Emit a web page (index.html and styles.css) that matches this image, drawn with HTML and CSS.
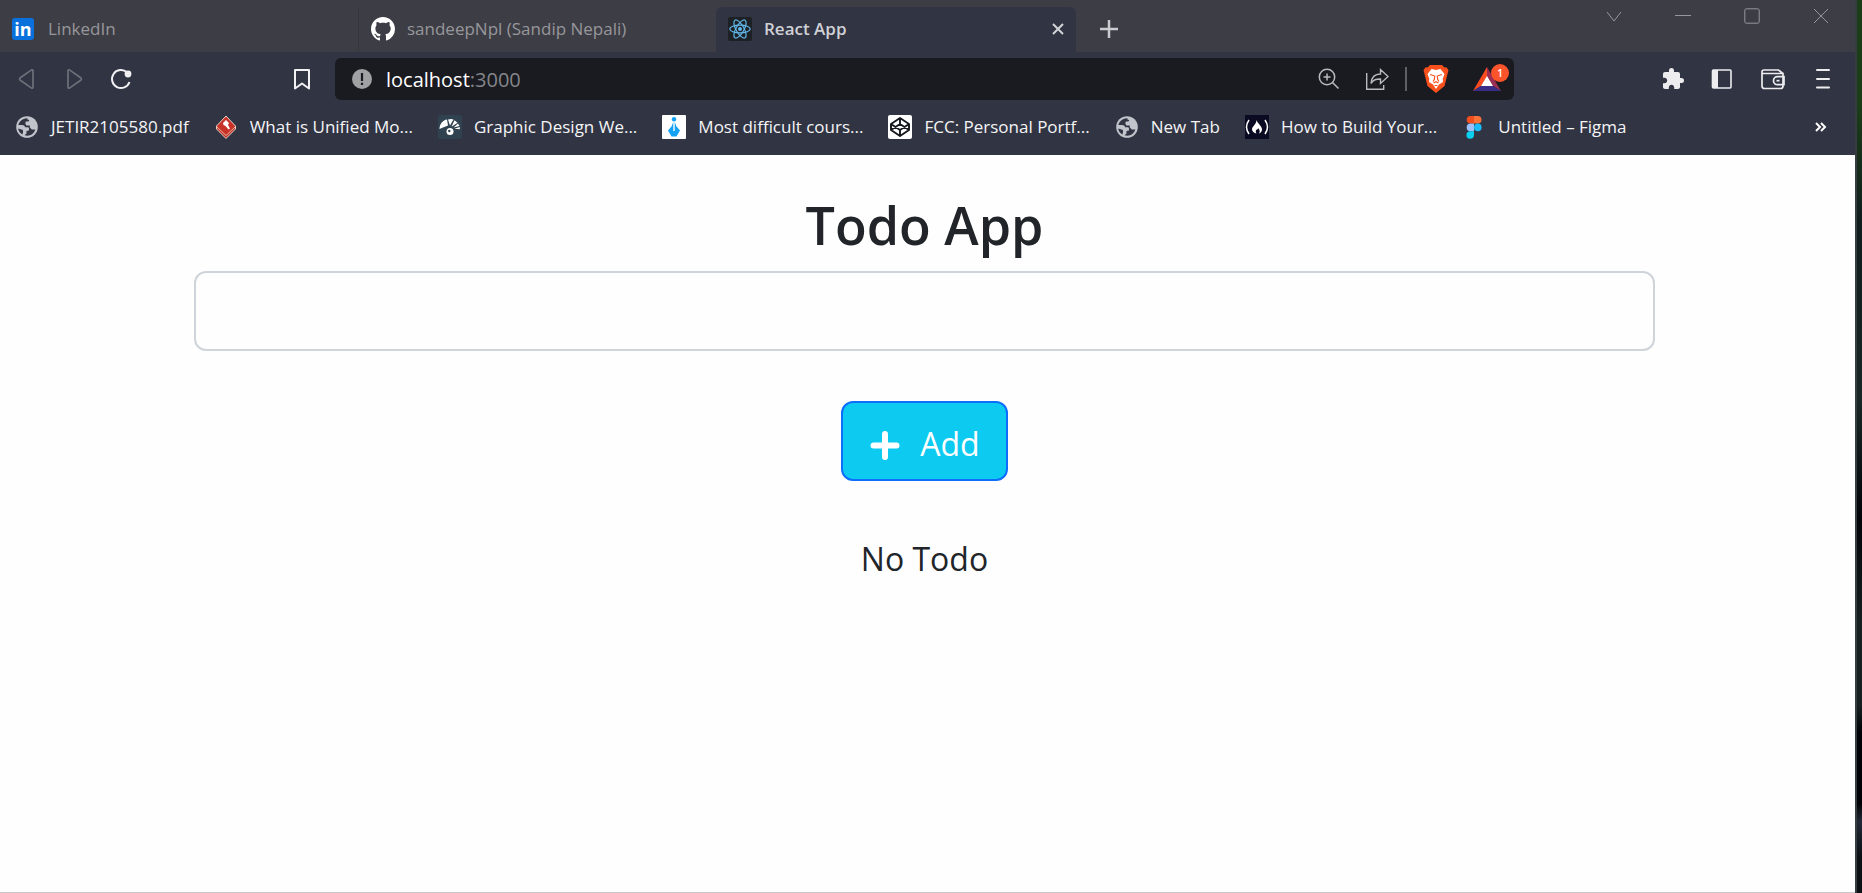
FILE: index.html
```html
<!DOCTYPE html>
<html lang="en">
<head>
<meta charset="utf-8">
<title>React App</title>
<link rel="stylesheet" href="styles.css">
</head>
<body>
<svg class="defs" aria-hidden="true">
  <symbol id="globe" viewBox="0 0 24 24">
    <circle cx="12" cy="12" r="10.800" fill="#c2c4cb"/>
    <path fill="#313443" d="M12.500 3.200C8 3 4.500 6 3.300 10h3.500c2 0 3 .8 3.300 2.200h2.400c1 0 1.500.7 1.500 1.600v1.700l-2.500.5v2.500l-2 1.700c5 1.500 9.500-1 10.800-5.700h-3.500l-2-2v-2h-3.500l-1-2 .5-2h2.500l1-1.300-2-1zM3.200 13.500c.3 2.500 1.800 4.700 4 6l.8-1.800V15z"/>
  </symbol>
</svg>
<div class="desktop">
  <div class="window">
    <header class="chrome">
      <div class="tabstrip">
        <div class="tabs">
          <button class="tab" type="button">
            <svg class="icon" viewBox="0 0 24 24"><rect y="1" width="22" height="22" rx="3" fill="#0a70dc"/><text x="11" y="19" class="in-mark">in</text></svg>
            <span>LinkedIn</span>
          </button>
          <button class="tab tab-divided" type="button">
            <svg class="icon" viewBox="0 0 16 16"><path fill="#fff" d="M8 0C3.580 0 0 3.580 0 8c0 3.540 2.290 6.530 5.470 7.590.4.070.55-.17.55-.38 0-.19-.01-.82-.01-1.490-2.010.37-2.530-.49-2.690-.94-.09-.23-.48-.94-.82-1.130-.28-.15-.68-.52-.01-.53.63-.01 1.080.58 1.230.82.72 1.210 1.870.87 2.330.66.070-.52.28-.87.51-1.070-1.780-.2-3.640-.89-3.640-3.950 0-.87.31-1.590.82-2.150-.08-.2-.36-1.020.08-2.120 0 0 .67-.21 2.200.82.64-.18 1.320-.27 2-.27s1.360.09 2 .27c1.530-1.040 2.200-.82 2.200-.82.44 1.100.16 1.920.08 2.120.51.56.82 1.270.82 2.150 0 3.070-1.870 3.750-3.650 3.950.29.25.54.73.54 1.480 0 1.070-.01 1.930-.01 2.200 0 .21.15.46.55.38A8.010 8.010 0 0 0 16 8c0-4.420-3.580-8-8-8z"/></svg>
            <span>sandeepNpl (Sandip Nepali)</span>
          </button>
          <div class="tab tab-active">
            <svg class="icon" viewBox="0 0 24 24"><rect width="24" height="24" rx="2" fill="#1d2024"/><g fill="none" stroke="#61b8ea" stroke-width="1.200"><ellipse cx="12" cy="12" rx="10.200" ry="3.900"/><ellipse cx="12" cy="12" rx="10.200" ry="3.900" transform="rotate(60 12 12)"/><ellipse cx="12" cy="12" rx="10.200" ry="3.900" transform="rotate(120 12 12)"/></g><circle cx="12" cy="12" r="2" fill="#61b8ea"/></svg>
            <span class="tab-title">React App</span>
            <button class="tab-close" type="button" aria-label="Close tab"><svg width="12" height="12" viewBox="0 0 12 12"><path d="M1 1l10 10M11 1L1 11" stroke="#d3d4d8" stroke-width="2"/></svg></button>
          </div>
          <button class="new-tab" type="button" aria-label="New tab"><svg width="18" height="18" viewBox="0 0 18 18"><path d="M9 0v18M0 9h18" stroke="#cbccd0" stroke-width="2.500"/></svg></button>
        </div>
        <div class="controls">
          <button type="button" aria-label="Search tabs"><svg width="16" height="16" viewBox="0 0 16 16"><path d="M1 4l7 9 7-9"/></svg></button>
          <button type="button" aria-label="Minimize"><svg width="16" height="16" viewBox="0 0 16 16"><path d="M0 7.500h16"/></svg></button>
          <button type="button" aria-label="Maximize"><svg width="16" height="16" viewBox="0 0 16 16"><rect x=".8" y=".8" width="14.400" height="14.400" rx="1.500"/></svg></button>
          <button type="button" aria-label="Close"><svg width="16" height="16" viewBox="0 0 16 16"><path d="M1 1l14 14M15 1L1 15"/></svg></button>
        </div>
      </div>
      <div class="toolbar">
        <div class="nav">
          <button type="button" aria-label="Back"><svg class="icon" viewBox="0 0 24 24"><path d="M18 3.500v17q-.3 1-1.500.6L5 13q-1-1 0-2L16.500 2.900q1.200-.4 1.500.6z" fill="none" stroke="#6d7079" stroke-width="1.700"/></svg></button>
          <button type="button" aria-label="Forward"><svg class="icon" viewBox="0 0 24 24"><path d="M6 3.500v17q.3 1 1.500.6L19 13q1-1 0-2L7.500 2.900Q6.300 2.500 6 3.500z" fill="none" stroke="#6d7079" stroke-width="1.700"/></svg></button>
          <button type="button" aria-label="Reload"><svg class="icon" viewBox="0 0 24 24"><path d="M18 5.300A9 9 0 1 0 20.500 15" fill="none" stroke="#f1f1f3" stroke-width="2"/><circle cx="19" cy="7" r="3.400" fill="#f1f1f3"/></svg></button>
          <button class="nav-end" type="button" aria-label="Bookmark this tab"><svg class="icon" viewBox="0 0 24 24"><path d="M5 3h14v18.500l-7-5-7 5z" fill="none" stroke="#f1f1f3" stroke-width="2" stroke-linejoin="round"/></svg></button>
        </div>
        <div class="address">
          <svg width="20" height="20" viewBox="0 0 20 20"><circle cx="10" cy="10" r="10" fill="#a0a1a3"/><path d="M8.900 4h2.200v8H8.900zM8.900 13.700h2.200V16H8.900z" fill="#1a1b20"/></svg>
          <a class="url" href="#"><b>localhost</b>:3000</a>
          <div class="address-actions">
            <button type="button" aria-label="Zoom"><svg class="icon" viewBox="0 0 24 24" fill="none" stroke="#b9babd" stroke-width="1.500"><circle cx="10" cy="10" r="7.700"/><path d="M15.500 15.500l6 6M10 6.500v7M6.500 10h7"/></svg></button>
            <button type="button" aria-label="Share"><svg class="icon" viewBox="0 0 24 24" fill="none" stroke="#b9babd" stroke-width="1.400"><path d="M1.700 6v16.200h17V18M6 16.500C6.500 9 10 7 15.500 7V2.500L23 9.500l-7.500 7V12C11 12 8.500 12.500 6 16.500z"/></svg></button>
            <span class="rule"></span>
            <button type="button" aria-label="Shields"><svg width="26" height="28" viewBox="0 0 26 28"><path d="M7 0h12l2.500 2.500 1.800-.2L25.500 5 24.500 9 21.500 21 13 28 4.500 21 1.500 9 .5 5l2.200-2.700 1.800.2z" fill="#f8501c"/><path d="M8.500 4l4.500 1 4.500-1 4 5-1.800 5 .3 3-4 2.500L13 24l-3-4.500L6 17l.3-3-1.800-5z" fill="#fff"/><path d="M7 9.500l4 1.200M19 9.500l-4 1.200M11.800 10.500l-.5 4L10 16.500M14.200 10.500l.5 4 1.300 2M10.500 18l2.500-1.300 2.500 1.300M11.500 20.500h3" fill="none" stroke="#f8501c" stroke-width="1.200"/></svg></button>
            <button class="rewards" type="button" aria-label="Rewards"><svg width="28" height="24" viewBox="0 0 28 24"><path d="M14 0L0 24l8-5 6-9z" fill="#fb4b20"/><path d="M14 0v10l6 9 8 5z" fill="#9c2e52"/><path d="M0 24h28l-8-5H8z" fill="#392d86"/><path d="M14 9l6 10H8z" fill="#fff"/></svg><span class="badge">1</span></button>
          </div>
        </div>
        <div class="extras">
          <button type="button" aria-label="Extensions"><svg class="icon" viewBox="0 0 24 24"><path fill="#ededef" d="M20.500 11H19V7c0-1.100-.9-2-2-2h-4V3.500a2.500 2.500 0 0 0-5 0V5H4c-1.100 0-2 .9-2 2v3.800h1.500c1.500 0 2.700 1.200 2.700 2.700s-1.200 2.700-2.700 2.700H2V20c0 1.100.9 2 2 2h3.800v-1.500c0-1.500 1.200-2.700 2.700-2.700s2.700 1.200 2.700 2.700V22H17c1.100 0 2-.9 2-2v-4h1.500a2.500 2.500 0 0 0 0-5z"/></svg></button>
          <button type="button" aria-label="Sidebar"><svg class="icon" viewBox="0 0 24 24"><rect x="1.500" y="3" width="18.500" height="18" rx="1" fill="none" stroke="#ededef" stroke-width="1.600"/><path d="M1.500 3H7v18H1.500z" fill="#ededef"/></svg></button>
          <button type="button" aria-label="Wallet"><svg class="icon" viewBox="0 0 24 24" fill="none" stroke="#ededef" stroke-width="1.700"><path d="M1 5q0-2 2-2h14.500l4.500 3.500V19q0 2.500-2.500 2.500h-16Q1 21.500 1 19zM1.500 6.500H21M23 9.700h-6.500a4 4 0 0 0 0 8H23z"/><path d="M15.500 13.700h3"/></svg></button>
          <button type="button" aria-label="Menu"><svg class="icon" viewBox="0 0 24 24"><path d="M6 3h12M6 12h12M6 20.500h12" stroke="#ededef" stroke-width="2" stroke-linecap="round"/></svg></button>
        </div>
      </div>
      <nav class="bookmarks">
        <a href="#"><svg class="icon"><use href="#globe"/></svg><span>JETIR2105580.pdf</span></a>
        <a href="#"><svg class="icon" viewBox="0 0 24 24"><path d="M12 1l9.500 10v3L12 23.500 2.500 14v-3z" fill="#c83228" stroke="#e3d0c4"/><path d="M3 12l9 8.500 9-8.500" fill="none" stroke="#e9b39b"/><path d="M9 8l3-3 3 3-1 2 2 3.500-1.500 1L11.500 11 9.500 10z" fill="#fff"/></svg><span>What is Unified Mo...</span></a>
        <a href="#"><svg class="icon" viewBox="0 0 24 24"><rect width="24" height="24" rx="2" fill="#304250"/><path d="M1.500 14C1.500 9 5 5 9 4.500l1 6-5 2zM10 4.500q3-1 5.500 0L12 10.500zM16.500 5.200l3 2.500-6 4zM20 8.500l1.500 2.500-6 1.500z" fill="#fff"/><path d="M21.800 12v2.300l-5.500-.5z" fill="#fff"/><circle cx="12" cy="16.500" r="3.500" fill="#fff"/><circle cx="11.300" cy="16" r="1.200" fill="#304250"/></svg><span>Graphic Design We...</span></a>
        <a href="#"><svg class="icon" viewBox="0 0 24 24"><rect width="24" height="24" rx="1" fill="#fff"/><circle cx="12" cy="4.300" r="2.200" fill="#12a2f4"/><path d="M11.300 7v9h1.400V7l1.800 4.500 3.500 4-3.500 6h-5l-3.500-6 3.500-4z" fill="#12a2f4"/></svg><span>Most difficult cours...</span></a>
        <a href="#"><svg class="icon" viewBox="0 0 24 24"><rect width="24" height="24" rx="2" fill="#fff"/><path d="M12 3l9 6v6l-9 6-9-6V9zM12 3v6M12 15v6M3 9l9 6 9-6M3 15l9-6 9 6" fill="none" stroke="#16171d" stroke-width="1.900" stroke-linejoin="round"/></svg><span>FCC: Personal Portf...</span></a>
        <a href="#"><svg class="icon"><use href="#globe"/></svg><span>New Tab</span></a>
        <a href="#"><svg class="icon" viewBox="0 0 24 24"><rect width="24" height="24" fill="#0a0a23"/><path d="M4 5q-5 7 0 14M20 5q5 7 0 14" fill="none" stroke="#fff" stroke-width="1.500"/><path d="M11.500 5c1 3.500 5.500 6 5.500 9.500 0 2-1.500 3.500-3 4 1.500-2.500.5-4-1-5.500 0 2-1.500 1.200-2 2.200-.6 1.300 0 2.500.6 3.300C9 18 7 16.500 7 14.200c0-3 4.500-4.700 4.500-9.200z" fill="#fff"/></svg><span>How to Build Your...</span></a>
        <a href="#"><svg class="icon" viewBox="0 0 24 24"><path d="M12 1H8.500a3.800 3.800 0 0 0 0 7.600H12z" fill="#f24e1e"/><path d="M12 1h3.700a3.800 3.800 0 0 1 0 7.600H12z" fill="#f97238"/><path d="M12 8.600H8.500a3.800 3.800 0 0 0 0 7.600H12z" fill="#9dc0fc"/><circle cx="15.800" cy="12.400" r="3.800" fill="#1abcfe"/><path d="M12 16.200H8.500a3.800 3.800 0 1 0 3.500 3.800z" fill="#0acfee"/></svg><span>Untitled – Figma</span></a>
        <button class="more" type="button" aria-label="More bookmarks"><svg width="12" height="12" viewBox="0 0 12 12"><path d="M1 2l4 4-4 4M6 2l4 4-4 4" fill="none" stroke="#fff" stroke-width="2"/></svg></button>
      </nav>
    </header>
    <main class="page">
      <h1>Todo App</h1>
      <input class="todo-input" type="text" aria-label="New todo">
      <button class="add" type="button"><svg width="30" height="30" viewBox="0 0 30 30"><path d="M15 4v23M3.500 15.500h23" stroke="#fff" stroke-width="6" stroke-linecap="round"/></svg><span>Add</span></button>
      <p class="empty">No Todo</p>
    </main>
  </div>
</div>
</body>
</html>
```

FILE: styles.css
```css
* { box-sizing: border-box; }

body {
  margin: 0;
  font-family: "Open Sans", "Noto Sans", sans-serif;
  color: #212529;
}

button {
  padding: 0;
  border: 0;
  background: none;
  color: inherit;
  font: inherit;
}

svg { display: block; flex: none; }

.defs { position: absolute; width: 0; height: 0; }

.icon { width: 24px; height: 24px; }

.desktop {
  min-height: 100vh;
  display: flex;
  padding-right: 5px;
  background: linear-gradient(#1b3d18 0, #1b3d18 12%, #101d1e 25%, #182625 45%, #02040a 58%, #16211f 70%, #16211f 79%, #000207 82%, #000207 90%, #222936 92%, #0a1013 96%);
}

.window {
  flex: 1;
  min-width: 0;
  display: flex;
  flex-direction: column;
  border-right: 2px solid #363d40;
  background: #fefefe;
}

.chrome { background: #313443; font-size: 17px; }

.tabstrip {
  display: flex;
  justify-content: space-between;
  height: 52px;
  background: #3d3d45;
}

.tabs { display: flex; align-items: flex-end; }

.tab {
  display: flex;
  align-items: center;
  gap: 12px;
  width: 358px;
  height: 45px;
  padding: 0 12px 2px;
  color: #97979b;
}

.tab-divided { border-left: 1px solid #36363b; }

.tab-active {
  width: 360px;
  border-radius: 6px 6px 0 0;
  background: #313443;
  color: #d0d1d6;
  font-weight: 600;
}

.tab-title { flex: 1; }

.in-mark {
  fill: #fff;
  font: 700 18px "Open Sans", sans-serif;
  text-anchor: middle;
}

.new-tab { display: flex; align-items: center; height: 45px; padding: 0 24px 2px; }

.controls { display: flex; }

.controls button {
  display: flex;
  align-items: center;
  justify-content: center;
  width: 69px;
  height: 32px;
}

.controls svg { fill: none; stroke: #96969c; stroke-width: 1; }

.toolbar { display: flex; align-items: center; padding-top: 6px; }

.nav {
  display: flex;
  gap: 23px;
  width: 335px;
  padding: 0 21px 0 15px;
}

.nav-end { margin-left: auto; }

.address {
  flex: 1;
  display: flex;
  align-items: center;
  gap: 14px;
  height: 42px;
  padding: 0 5px 0 17px;
  border-radius: 6px;
  background: #1a1b20;
}

.url {
  flex: 1;
  color: #85868b;
  font-size: 20px;
  text-decoration: none;
}

.url b { color: #fff; font-weight: 400; }

.address-actions { display: flex; align-items: center; gap: 24px; }

.rule { width: 2px; height: 24px; margin: 0 -8px 0 -8px; background: #5f6066; }

.rewards { position: relative; width: 36px; }

.badge {
  position: absolute;
  top: -3px;
  right: 0;
  width: 18px;
  height: 18px;
  border-radius: 9px;
  background: #fb542b;
  color: #fff;
  font-size: 10px;
  font-weight: 600;
  line-height: 18px;
  text-align: center;
}

.extras {
  display: flex;
  justify-content: space-between;
  width: 341px;
  padding: 0 20px 0 147px;
}

.bookmarks {
  display: flex;
  align-items: center;
  gap: 25px;
  height: 55px;
  padding: 0 28px 2px 15px;
}

.bookmarks a {
  display: flex;
  align-items: center;
  gap: 12px;
  color: #f4f4f6;
  text-decoration: none;
  white-space: nowrap;
}

.more { margin-left: auto; }

.page {
  flex: 1;
  display: flex;
  flex-direction: column;
  align-items: center;
  padding: 36px 200px 32px 194px;
  border-bottom: 1px solid #c8c8c8;
}

.page h1 {
  margin: 0 0 12px;
  font-size: 52px;
  font-weight: 600;
  line-height: 68px;
}

.todo-input {
  width: 100%;
  height: 80px;
  padding: 8px 24px;
  border: 2px solid #ced4da;
  border-radius: 12px;
  background: #fefefe;
  font: inherit;
  font-size: 32px;
}

.add {
  display: flex;
  align-items: center;
  gap: 20px;
  height: 80px;
  margin-top: 50px;
  padding: 4px 26px 0 27px;
  border: 2px solid #0d6efd;
  border-radius: 12px;
  background: #0dcaf0;
  color: #fff;
  font-size: 32px;
}

.add svg { margin-top: 4px; }

.empty {
  margin: 52px 0 0;
  font-size: 32px;
  line-height: 52px;
}
```
